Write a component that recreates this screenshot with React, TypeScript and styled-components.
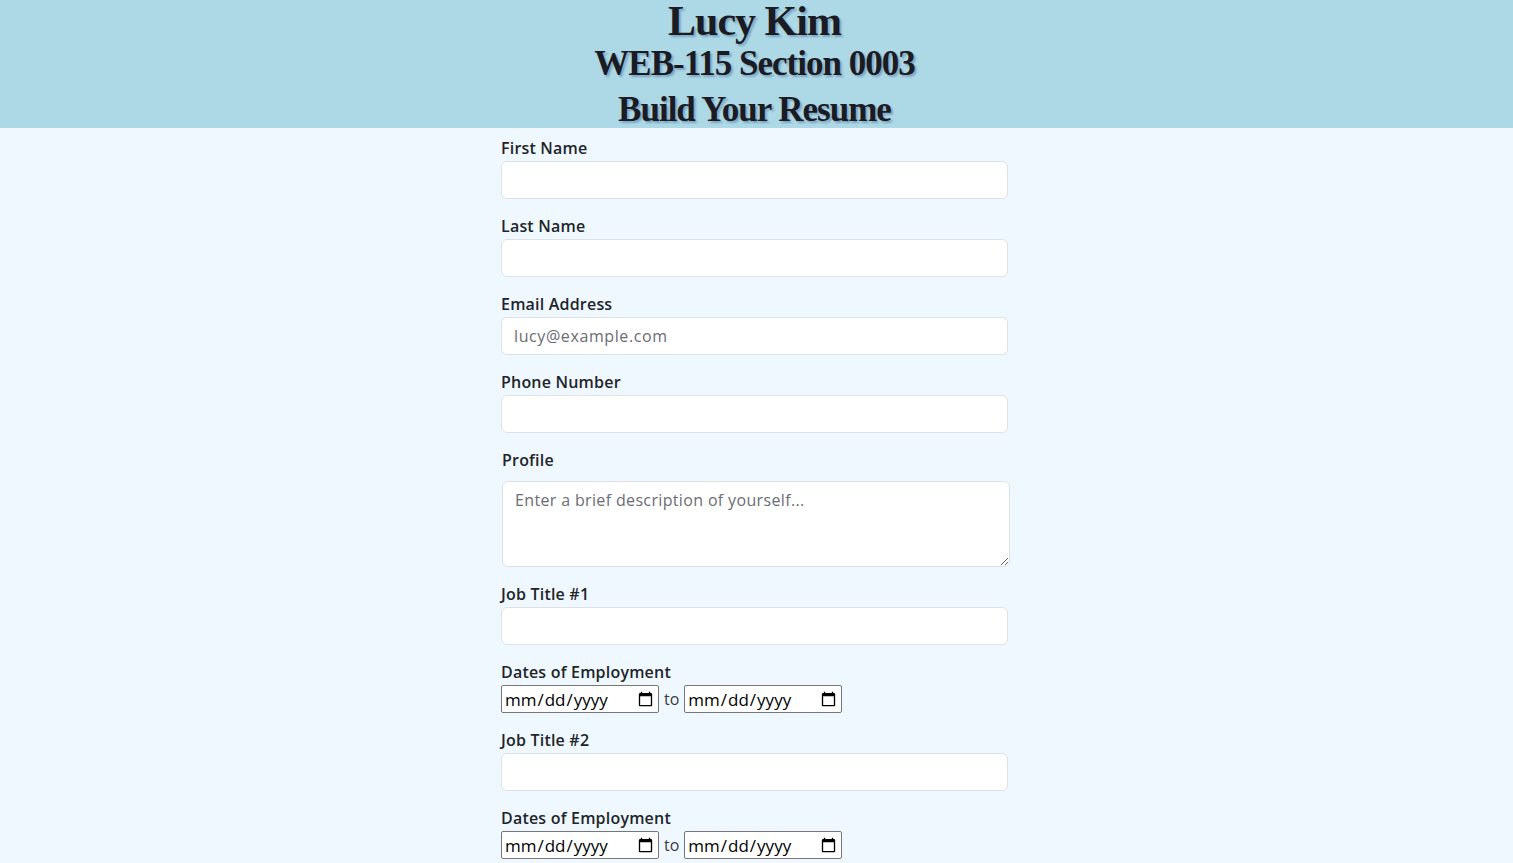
import React from "react";
import styled, { createGlobalStyle } from "styled-components";

const GlobalStyle = createGlobalStyle`
  html, body {
    margin: 0;
    padding: 0;
    background: #f0f8ff;
  }
  body {
    font-family: "Open Sans", "Noto Sans", Arial, sans-serif;
    color: #212529;
  }
  * { box-sizing: border-box; }
`;

const Header = styled.header`
  background: #add8e6;
  height: 128px;
  padding-right: 4px;
  display: flex;
  flex-direction: column;
  align-items: center;
  font-family: "Liberation Serif", "Times New Roman", serif;
  color: #1b1b24;
  text-shadow: 2px 2px 2px rgba(50, 90, 140, 0.4);
`;

const Title = styled.h1<{ $size: number; $lh: number; $pad?: number }>`
  margin: 0;
  padding-top: ${(p) => p.$pad ?? 0}px;
  font-weight: 700;
  font-size: ${(p) => p.$size}px;
  line-height: ${(p) => p.$lh}px;
  letter-spacing: -1px;
  white-space: nowrap;
`;

const Main = styled.main`
  display: flex;
  justify-content: center;
  padding: 8px 4px 40px 0;
`;

const Form = styled.form`
  width: 507px;
  display: flex;
  flex-direction: column;
`;

const Group = styled.div<{ $shift?: number; $gap?: number }>`
  display: flex;
  flex-direction: column;
  gap: ${(p) => p.$gap ?? 1}px;
  margin-left: ${(p) => p.$shift ?? 0}px;
  margin-bottom: 15px;
`;

const Label = styled.label`
  display: block;
  font-size: 16px;
  line-height: 24px;
  font-weight: 600;
  color: #212529;
  letter-spacing: 0.2px;
`;

const TextInput = styled.input`
  width: 507px;
  height: 38px;
  padding: 6px 12px;
  font-family: "Open Sans", "Noto Sans", Arial, sans-serif;
  font-size: 16px;
  letter-spacing: 0.6px;
  color: #212529;
  background: #fff;
  border: 1px solid #dee2e6;
  border-radius: 6px;
  outline: none;
  &::placeholder {
    color: #6c6c74;
  }
`;

const TextArea = styled.textarea`
  width: 508px;
  height: 86px;
  padding: 6px 12px;
  font-family: "Open Sans", "Noto Sans", Arial, sans-serif;
  font-size: 16px;
  line-height: 24px;
  letter-spacing: 0.35px;
  color: #212529;
  background: #fff;
  border: 1px solid #dee2e6;
  border-radius: 6px;
  outline: none;
  &::placeholder {
    color: #6c6c74;
  }
`;

const DateRow = styled.div`
  display: flex;
  align-items: center;
  gap: 5px;
`;

const DateInput = styled.input`
  width: 158px;
  height: 28px;
  padding: 1px 2px;
  font-family: "Open Sans", "Noto Sans", Arial, sans-serif;
  font-size: 17px;
  color: #000;
  background: #fff;
  border: 1px solid #767676;
  border-radius: 2px;
`;

const To = styled.span`
  font-size: 16px;
  line-height: 24px;
  color: #3a3a44;
`;

function Field({ label, placeholder, type = "text" }: { label: string; placeholder?: string; type?: string }) {
  return (
    <Group>
      <Label>{label}</Label>
      <TextInput type={type} placeholder={placeholder} />
    </Group>
  );
}

function Dates() {
  return (
    <Group>
      <Label>Dates of Employment</Label>
      <DateRow>
        <DateInput type="date" />
        <To>to</To>
        <DateInput type="date" />
      </DateRow>
    </Group>
  );
}

export default function App() {
  return (
    <>
      <GlobalStyle />
      <Header>
        <Title $size={42} $lh={42}>Lucy Kim</Title>
        <Title as="h2" $size={35} $lh={44}>WEB-115 Section 0003</Title>
        <Title as="h3" $size={35} $lh={42} $pad={3}>Build Your Resume</Title>
      </Header>
      <Main>
        <Form>
          <Field label="First Name" />
          <Field label="Last Name" />
          <Field label="Email Address" type="email" placeholder="lucy@example.com" />
          <Field label="Phone Number" type="tel" />
          <Group $shift={1} $gap={9}>
            <Label>Profile</Label>
            <TextArea placeholder="Enter a brief description of yourself..." />
          </Group>
          <Field label="Job Title #1" />
          <Dates />
          <Field label="Job Title #2" />
          <Dates />
        </Form>
      </Main>
    </>
  );
}
